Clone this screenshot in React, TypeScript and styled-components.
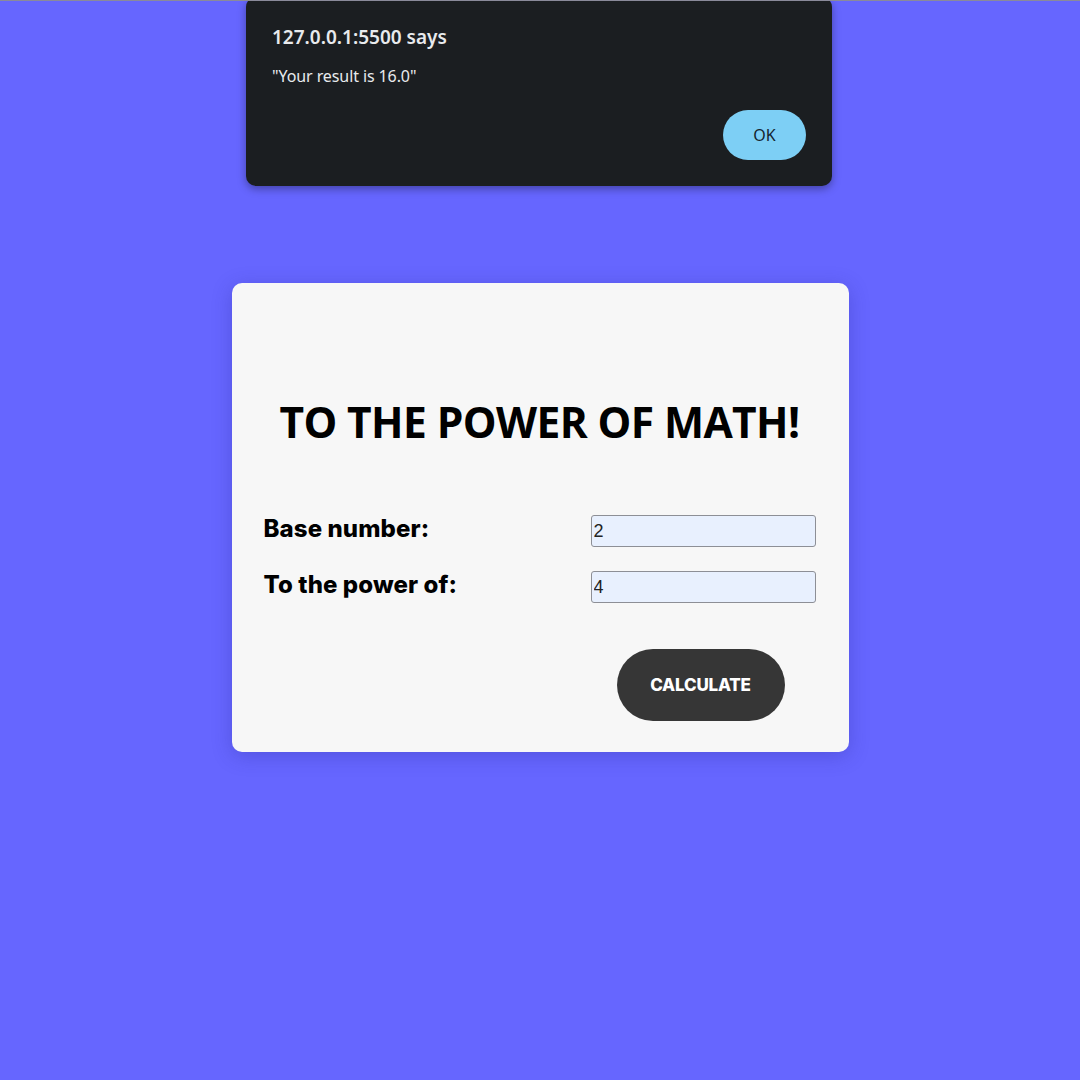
import React from "react";
import styled, { createGlobalStyle } from "styled-components";

const Global = createGlobalStyle`
  html, body {
    margin: 0;
    padding: 0;
    background: #6666ff;
    min-height: 100%;
  }
  body {
    border-top: 1px solid #8a8a9a;
    font-family: "Open Sans", "Noto Sans", sans-serif;
  }
`;

const Page = styled.div`
  position: relative;
  width: 1080px;
  height: 1079px;
  display: flex;
  flex-direction: column;
  align-items: center;
  padding-top: 282px;
  box-sizing: border-box;
`;

const Dialog = styled.div`
  position: absolute;
  top: -4px;
  left: 246px;
  width: 586px;
  height: 189px;
  box-sizing: border-box;
  background: #1b1e21;
  border-radius: 10px;
  box-shadow: 0 3px 8px rgba(0, 0, 0, 0.35);
  padding: 29px 26px 0 26px;
  display: flex;
  flex-direction: column;
  color: #e8eaed;
`;

const DialogTitle = styled.div`
  font-family: "Noto Sans", "Open Sans", sans-serif;
  font-size: 19px;
  font-weight: 600;
  letter-spacing: 0;
  line-height: 22px;
`;

const DialogMessage = styled.div`
  font-family: "Noto Sans", "Open Sans", sans-serif;
  font-size: 16px;
  letter-spacing: -0.1px;
  line-height: 20px;
  margin-top: 18px;
`;

const DialogActions = styled.div`
  display: flex;
  justify-content: flex-end;
  margin-top: 24px;
`;

const OkButton = styled.button`
  width: 83px;
  height: 50px;
  border: none;
  border-radius: 25px;
  background: #7dcff5;
  color: #15252e;
  font-family: "Noto Sans", "Open Sans", sans-serif;
  font-size: 16px;
  cursor: pointer;
`;

const Card = styled.div`
  width: 617px;
  height: 469px;
  box-sizing: border-box;
  background: #f7f7f7;
  border-radius: 10px;
  box-shadow: 0 4px 20px rgba(40, 40, 150, 0.3);
  padding: 109px 33px 0 32px;
  display: flex;
  flex-direction: column;
`;

const Heading = styled.h1`
  margin: 0;
  text-align: center;
  font-family: "Open Sans", "Noto Sans", sans-serif;
  font-weight: 700;
  font-size: 42.5px;
  letter-spacing: -0.6px;
  line-height: 60px;
  color: #000;
`;

const Form = styled.div`
  margin-top: 62px;
  display: grid;
  grid-template-columns: 1fr 225px;
  row-gap: 23px;
`;

const Label = styled.label`
  font-family: "Inter", sans-serif;
  font-weight: 800;
  font-size: 24px;
  letter-spacing: 0.1px;
  color: #000;
  line-height: 26px;
  margin-top: 2px;
  align-self: start;
`;

const Input = styled.input`
  box-sizing: border-box;
  width: 225px;
  height: 32px;
  margin-top: 1px;
  border: 1px solid #8d8f96;
  border-radius: 3px;
  background: #e8f0fe;
  font-family: "Liberation Sans", Arial, sans-serif;
  font-size: 18px;
  color: #222;
  padding: 0 2px;
  outline: none;
`;

const ButtonRow = styled.div`
  display: flex;
  justify-content: flex-end;
  margin-top: 46px;
  padding-right: 31px;
`;

const CalcButton = styled.button`
  width: 168px;
  height: 72px;
  border: none;
  border-radius: 36px;
  background: #363636;
  color: #fff;
  font-family: "Inter", sans-serif;
  font-weight: 800;
  font-size: 17px;
  letter-spacing: -0.2px;
  cursor: pointer;
`;

export default function App() {
  return (
    <>
      <Global />
      <Page>
        <Dialog>
          <DialogTitle>127.0.0.1:5500 says</DialogTitle>
          <DialogMessage>"Your result is 16.0"</DialogMessage>
          <DialogActions>
            <OkButton>OK</OkButton>
          </DialogActions>
        </Dialog>
        <Card>
          <Heading>TO THE POWER OF MATH!</Heading>
          <Form>
            <Label htmlFor="base">Base number:</Label>
            <Input id="base" defaultValue="2" />
            <Label htmlFor="power">To the power of:</Label>
            <Input id="power" defaultValue="4" />
          </Form>
          <ButtonRow>
            <CalcButton>CALCULATE</CalcButton>
          </ButtonRow>
        </Card>
      </Page>
    </>
  );
}
